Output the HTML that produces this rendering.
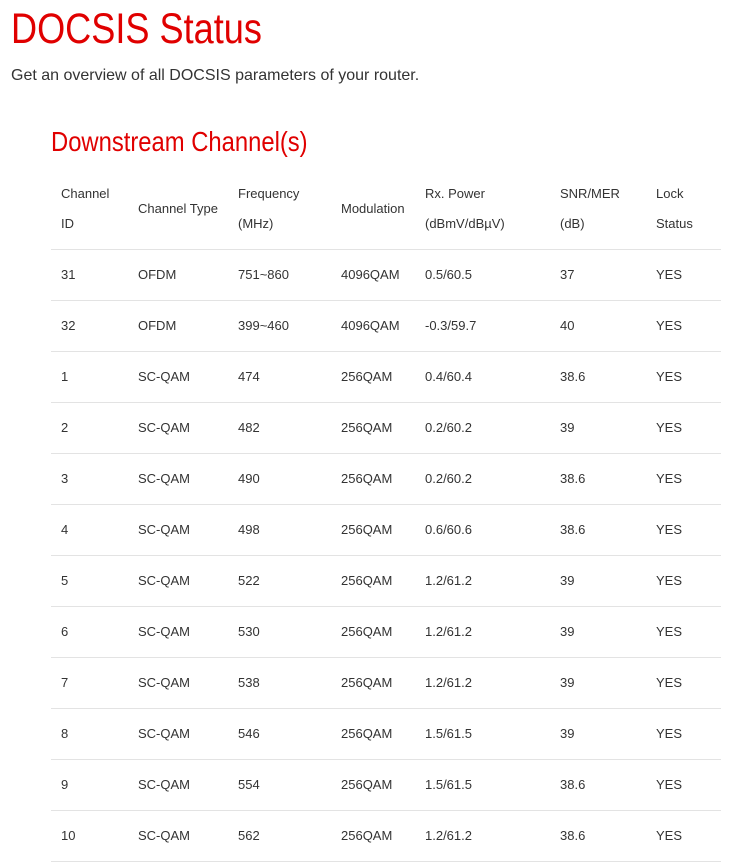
<!DOCTYPE html>
<html><head><meta charset="utf-8"><style>
body{margin:0;background:#fff;font-family:"Liberation Sans",sans-serif;color:#333;}
h1{position:absolute;left:11px;top:4px;margin:0;font-weight:normal;color:#e00000;font-size:43px;line-height:50px;transform:scaleX(0.84);transform-origin:left;white-space:nowrap;}
.sub{position:absolute;left:11px;top:67px;font-size:16px;line-height:18px;color:#333;}
h2{position:absolute;left:51px;top:125px;margin:0;font-weight:normal;color:#e00000;font-size:28px;line-height:34px;transform:scaleX(0.85);transform-origin:left;white-space:nowrap;}
table{position:absolute;left:51px;top:177px;width:670px;border-collapse:collapse;table-layout:fixed;font-size:13px;color:#333;}
th{font-weight:normal;text-align:left;padding:2px 10px 0;line-height:30px;height:72px;box-sizing:border-box;border-bottom:1px solid #e3e3e3;vertical-align:top;}
th.m{vertical-align:top;padding-top:17px;}
td{padding:0 10px;height:50px;line-height:30px;border-bottom:1px solid #e3e3e3;}
</style></head><body>
<h1>DOCSIS Status</h1>
<div class="sub">Get an overview of all DOCSIS parameters of your router.</div>
<h2>Downstream Channel(s)</h2>
<table>
<colgroup><col style="width:77px"><col style="width:100px"><col style="width:103px"><col style="width:84px"><col style="width:135px"><col style="width:96px"><col style="width:75px"></colgroup>
<tr><th>Channel<br>ID</th><th class="m">Channel Type</th><th>Frequency<br>(MHz)</th><th class="m">Modulation</th><th>Rx. Power<br>(dBmV/dBµV)</th><th>SNR/MER<br>(dB)</th><th>Lock<br>Status</th></tr>
<tr><td>31</td><td>OFDM</td><td>751~860</td><td>4096QAM</td><td>0.5/60.5</td><td>37</td><td>YES</td></tr>
<tr><td>32</td><td>OFDM</td><td>399~460</td><td>4096QAM</td><td>-0.3/59.7</td><td>40</td><td>YES</td></tr>
<tr><td>1</td><td>SC-QAM</td><td>474</td><td>256QAM</td><td>0.4/60.4</td><td>38.6</td><td>YES</td></tr>
<tr><td>2</td><td>SC-QAM</td><td>482</td><td>256QAM</td><td>0.2/60.2</td><td>39</td><td>YES</td></tr>
<tr><td>3</td><td>SC-QAM</td><td>490</td><td>256QAM</td><td>0.2/60.2</td><td>38.6</td><td>YES</td></tr>
<tr><td>4</td><td>SC-QAM</td><td>498</td><td>256QAM</td><td>0.6/60.6</td><td>38.6</td><td>YES</td></tr>
<tr><td>5</td><td>SC-QAM</td><td>522</td><td>256QAM</td><td>1.2/61.2</td><td>39</td><td>YES</td></tr>
<tr><td>6</td><td>SC-QAM</td><td>530</td><td>256QAM</td><td>1.2/61.2</td><td>39</td><td>YES</td></tr>
<tr><td>7</td><td>SC-QAM</td><td>538</td><td>256QAM</td><td>1.2/61.2</td><td>39</td><td>YES</td></tr>
<tr><td>8</td><td>SC-QAM</td><td>546</td><td>256QAM</td><td>1.5/61.5</td><td>39</td><td>YES</td></tr>
<tr><td>9</td><td>SC-QAM</td><td>554</td><td>256QAM</td><td>1.5/61.5</td><td>38.6</td><td>YES</td></tr>
<tr><td>10</td><td>SC-QAM</td><td>562</td><td>256QAM</td><td>1.2/61.2</td><td>38.6</td><td>YES</td></tr>
</table>
</body></html>
